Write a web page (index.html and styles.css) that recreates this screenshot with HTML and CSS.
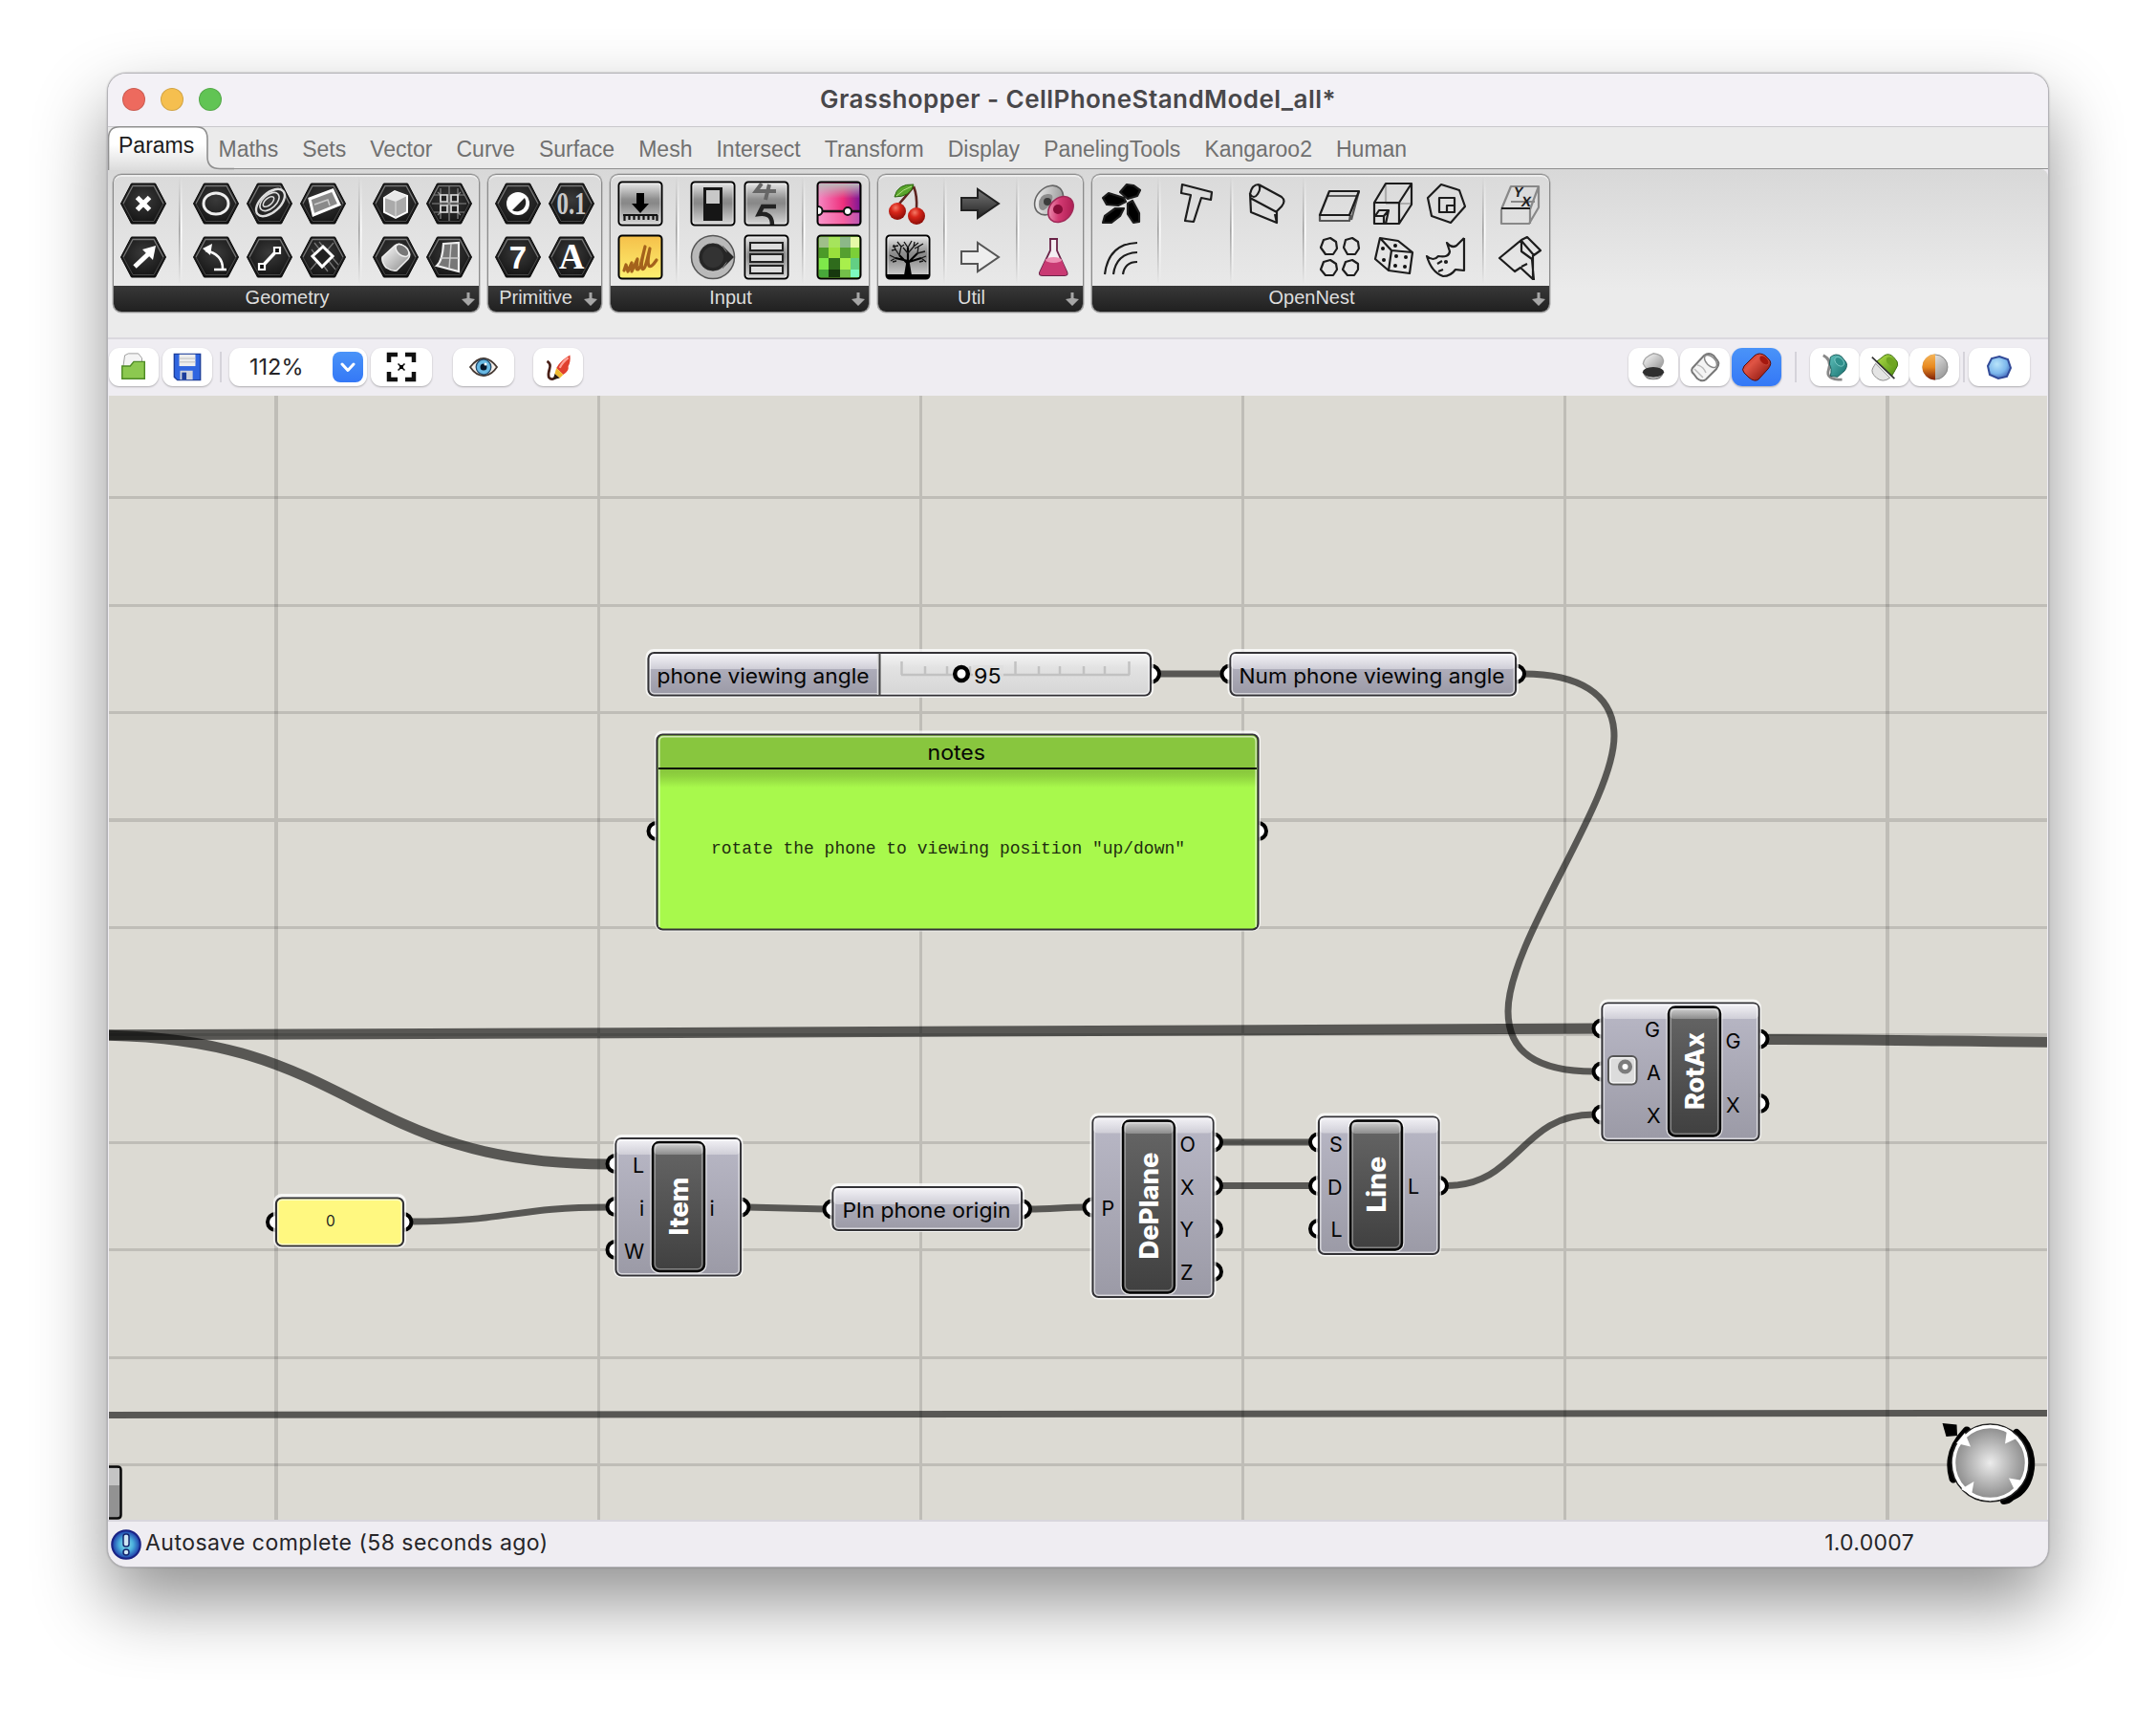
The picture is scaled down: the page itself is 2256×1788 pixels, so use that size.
FILE: index.html
```html
<!DOCTYPE html>
<html lang="en">
<head>
<meta charset="utf-8">
<title>Grasshopper - CellPhoneStandModel_all*</title>
<link rel="stylesheet" href="styles.css">
</head>
<body>
<svg class="defs" width="0" height="0">
  <defs>
    <radialGradient id="hexFill" cx=".5" cy=".4" r=".6"><stop offset="0" stop-color="#3a3a3a"/><stop offset="1" stop-color="#141414"/></radialGradient>
    <linearGradient id="tile" x2="0" y2="1"><stop offset="0" stop-color="#ececec"/><stop offset=".4" stop-color="#8e8e8e"/><stop offset=".5" stop-color="#888"/><stop offset="1" stop-color="#d8d8d8"/></linearGradient>
    <linearGradient id="grey" x2="1" y2="1"><stop offset="0" stop-color="#fff"/><stop offset="1" stop-color="#8a8a8a"/></linearGradient>
    <linearGradient id="gold" x2="0" y2="1"><stop offset="0" stop-color="#f5c04a"/><stop offset="1" stop-color="#fdf070"/></linearGradient>
    <linearGradient id="pink" x2="1" y2="0"><stop offset="0" stop-color="#f58ac4"/><stop offset=".6" stop-color="#ee2f7c"/><stop offset="1" stop-color="#7a1798"/></linearGradient>
    <linearGradient id="fade" x2="0" y2="1"><stop offset="0" stop-color="#bbb"/><stop offset=".6" stop-color="#bbb" stop-opacity="0"/></linearGradient>
    <radialGradient id="cherry" cx=".4" cy=".3" r=".7"><stop offset="0" stop-color="#f47a66"/><stop offset=".4" stop-color="#d8261a"/><stop offset="1" stop-color="#8c0d08"/></radialGradient>
    <linearGradient id="dark" x2="0" y2="1"><stop offset="0" stop-color="#777"/><stop offset="1" stop-color="#222"/></linearGradient>
    <linearGradient id="red" x2="1" y2="1"><stop offset="0" stop-color="#b81d12"/><stop offset=".35" stop-color="#e05545"/><stop offset="1" stop-color="#7d0b05"/></linearGradient>
    <linearGradient id="teal" x2="1" y2="1"><stop offset="0" stop-color="#5fc0bb"/><stop offset="1" stop-color="#17706e"/></linearGradient>
    <linearGradient id="green" x2="1" y2="1"><stop offset="0" stop-color="#b4e04a"/><stop offset="1" stop-color="#4b8a0f"/></linearGradient>
    <radialGradient id="sky" cx=".4" cy=".35" r=".7"><stop offset="0" stop-color="#b8e4fa"/><stop offset=".6" stop-color="#7db8ec"/><stop offset="1" stop-color="#3f63b8"/></radialGradient>
    <linearGradient id="orange" x2="0" y2="1"><stop offset="0" stop-color="#f5b559"/><stop offset=".5" stop-color="#e8891f"/><stop offset="1" stop-color="#7d1f08"/></linearGradient>
    <linearGradient id="rose" x2="1" y2="1"><stop offset="0" stop-color="#f8b4cc"/><stop offset=".45" stop-color="#d23a72"/><stop offset="1" stop-color="#a31449"/></linearGradient>
    <symbol id="hex" viewBox="0 0 48 48"><path d="M.5 24 11.500 3h25l11 21-11 21h-25z" fill="url(#hexFill)" stroke="#080808"/><path d="M3 24 13 5.500h22L45 24" fill="none" stroke="#777" stroke-width="1.300"/><path d="M45 24 35 42.500H13L3 24" fill="none" stroke="#484848"/></symbol>
    <symbol id="box" viewBox="0 0 48 48"><rect x="1.500" y="1.500" width="45" height="45" rx="3.500" fill="url(#tile)" stroke="#000" stroke-width="2"/><rect x="3" y="3" width="42" height="42" rx="2" fill="none" stroke="#fff" stroke-opacity=".6"/></symbol>
    <symbol id="more" viewBox="0 0 16 16"><path d="M6.500 1h3v6l5.500 1L8 15 1 8l5.500-1z" fill="#a6a6a6"/></symbol>
  </defs>
</svg>

<main class="window">
  <header class="titlebar">
    <div class="lights"><i class="light red"></i><i class="light amber"></i><i class="light green"></i></div>
    <h1 class="title">Grasshopper - CellPhoneStandModel_all*</h1>
  </header>

  <nav class="tabs">
    <span class="tab active">
      <svg class="tab-shape" width="132" height="46" viewBox="0 0 132 46">
        <defs><linearGradient id="tabFill" x2="0" y2="1"><stop offset=".4" stop-color="#fff"/><stop offset="1" stop-color="#dcdcdc"/></linearGradient></defs>
        <path d="M0 46V13Q.5 1 12 1H92Q104 1 104 13V32Q104 44.500 117 44.500V46z" fill="url(#tabFill)"/>
        <path d="M.5 46V13Q.5 .8 12 .8H92Q104 .8 104 13V32Q104 44.500 117 44.500H132" fill="none" stroke="#8f8f8f" stroke-width="1.600"/>
      </svg>
      <b>Params</b>
    </span>
    <span class="tab">Maths</span><span class="tab">Sets</span><span class="tab">Vector</span><span class="tab">Curve</span><span class="tab">Surface</span><span class="tab">Mesh</span><span class="tab">Intersect</span><span class="tab">Transform</span><span class="tab">Display</span><span class="tab">PanelingTools</span><span class="tab">Kangaroo2</span><span class="tab">Human</span>
  </nav>

  <section class="ribbon">
    <div class="group">
      <div class="icons">
        <div class="cols c1">
          <svg class="ic" viewBox="0 0 48 48"><use href="#hex"/><path d="M17.500 17.500l13 13M30.500 17.500l-13 13" stroke="#fff" stroke-width="5"/></svg>
          <svg class="ic" viewBox="0 0 48 48"><use href="#hex"/><path d="M15 34 31 19" stroke="#fff" stroke-width="5"/><path d="M23 16 37 12 34 27z" fill="#fff"/></svg>
        </div>
        <i class="sep"></i>
        <div class="cols c3">
          <svg class="ic" viewBox="0 0 48 48"><use href="#hex"/><ellipse cx="24" cy="24" rx="13" ry="11" fill="none" stroke="#eee" stroke-width="3"/></svg>
          <svg class="ic" viewBox="0 0 48 48"><use href="#hex"/><g fill="none" stroke="#ddd"><ellipse cx="25" cy="23" rx="18" ry="10" transform="rotate(-42 25 23)" stroke-width="2.400"/><ellipse cx="24" cy="22" rx="12" ry="7" transform="rotate(-42 24 22)" stroke-width="1.600"/><ellipse cx="23" cy="22" rx="7" ry="3.500" transform="rotate(-42 23 22)" stroke-width="1.500"/></g></svg>
          <svg class="ic" viewBox="0 0 48 48"><use href="#hex"/><path d="M10 19 34 10 41 25 14 36z" fill="#8a8a8a" stroke="#fff" stroke-width="3"/><path d="M15 25 29 20l2 6" fill="none" stroke="#ccc" stroke-width="1.500"/></svg>
          <svg class="ic" viewBox="0 0 48 48"><use href="#hex"/><path d="M13 17Q31 21 31 36M22 37H35" fill="none" stroke="#fff" stroke-width="2.600"/><path d="M10 15 20 10 18 22z" fill="#fff"/></svg>
          <svg class="ic" viewBox="0 0 48 48"><use href="#hex"/><path d="M16 34 31 18" stroke="#fff" stroke-width="3.500"/><g fill="#111" stroke="#fff" stroke-width="2.200"><path d="M13 31h6v6h-6zM29 14h6v6h-6z"/></g></svg>
          <svg class="ic" viewBox="0 0 48 48"><use href="#hex"/><path d="M15 9 37 37M35 9 11 37M12 16 29 39M20 8 40 32" stroke="#777" stroke-width="1.300"/><path d="M24 13 34 23 23 34 13 23z" fill="#222" stroke="#fff" stroke-width="3"/></svg>
        </div>
        <i class="sep"></i>
        <div class="cols c2">
          <svg class="ic" viewBox="0 0 48 48"><use href="#hex"/><path d="M12 18 23 11 36 16V33L24 39 12 33z" fill="#aaa" stroke="#fff" stroke-width="2"/><path d="M12 18 24 22 36 16 23 11z" fill="#e8e8e8"/><path d="M24 22V39" stroke="#ddd"/></svg>
          <svg class="ic" viewBox="0 0 48 48"><use href="#hex"/><path d="M15 8V40M24 6V42M33 8V40M8 15H40M6 24H42M8 33H40M12 12 36 36M36 12 12 36" stroke="#888" stroke-width="1.200"/><g fill="#222" stroke="#ddd" stroke-width="1.700"><path d="M15 15h7v7h-7zM26 15h7v7h-7zM15 26h7v7h-7zM26 26h7v7h-7z"/></g></svg>
          <svg class="ic" viewBox="0 0 48 48"><use href="#hex"/><path d="M10 24 23 12Q28 8 33 13L38 19Q40 22 37 26L25 38Q20 39 14 35 9 29 10 24z" fill="url(#grey)" stroke="#eee" stroke-width="1.500"/><ellipse cx="31" cy="17" rx="8" ry="5" transform="rotate(40 31 17)" fill="#777" stroke="#eee" stroke-width="1.500"/></svg>
          <svg class="ic" viewBox="0 0 48 48"><use href="#hex"/><path d="M18 10 34 9V39L11 33Q17 28 18 10z" fill="#777" stroke="#eee" stroke-width="2.200"/><path d="M26 10 24 36M15 25 34 25" stroke="#ccc" stroke-width="1.500"/></svg>
        </div>
      </div>
      <div class="label"><span>Geometry</span><svg class="more"><use href="#more"/></svg></div>
    </div>

    <div class="group">
      <div class="icons">
        <div class="cols c2">
          <svg class="ic" viewBox="0 0 48 48"><use href="#hex"/><circle cx="24" cy="24" r="12" fill="#fff"/><path d="M31 18A9.500 9.500 0 0 1 18 31z" fill="#222"/></svg>
          <svg class="ic" viewBox="0 0 48 48"><use href="#hex"/><text x="24" y="35" class="glyph narrow" textLength="31" lengthAdjust="spacingAndGlyphs">0.1</text></svg>
          <svg class="ic" viewBox="0 0 48 48"><use href="#hex"/><text x="24" y="35.500" class="glyph">7</text></svg>
          <svg class="ic" viewBox="0 0 48 48"><use href="#hex"/><text x="24" y="35.500" class="glyph serif">A</text></svg>
        </div>
      </div>
      <div class="label"><span>Primitive</span><svg class="more"><use href="#more"/></svg></div>
    </div>

    <div class="group">
      <div class="icons">
        <div class="cols c1">
          <svg class="ic" viewBox="0 0 48 48"><use href="#box"/><path d="M20 13h8v11h5l-9 10-9-10h5z"/><path d="M6 36H42M7.500 36v6M12.500 36v5M17.500 36v5M22.500 36v5M27.500 36v5M32.500 36v5M37.500 36v5M41.500 36v6" stroke="#111" stroke-width="2.200"/></svg>
          <svg class="ic" viewBox="0 0 48 48"><rect x="1.500" y="1.500" width="45" height="45" rx="3.500" fill="url(#gold)" stroke="#000" stroke-width="2"/><path d="M7 38 9 32 11 39 15 30 15 39 21 26 20 36Q22 39 24 33L29 13Q24 33 26 36T31 27L34 15Q31 30 33 33T41 27" fill="none" stroke="#a4621c" stroke-width="3.200" stroke-linejoin="round" stroke-linecap="round"/></svg>
        </div>
        <i class="sep"></i>
        <div class="cols c2">
          <svg class="ic" viewBox="0 0 48 48"><use href="#box"/><path d="M14 7h20v35H14z" fill="#161616"/><path d="M17 10h14v14H17z" fill="#c8c8c8"/></svg>
          <svg class="ic" viewBox="0 0 48 48"><use href="#box"/><path d="M19 3 13 11H34M27 4 23 20" fill="none" stroke="#666" stroke-width="4"/><path d="M34 27H20L16 35Q30 33 30 46" fill="none" stroke="#222" stroke-width="4.500"/></svg>
          <svg class="ic" viewBox="0 0 48 48"><circle cx="24" cy="24" r="22.500" fill="#b9b9b9" stroke="#555" stroke-width="1.500"/><path d="M34 12 46 24 34 36z" fill="#262626"/><circle cx="24" cy="24" r="15" fill="#262626" stroke="#eee" stroke-opacity=".5"/><path d="M32 14 45 24 32 34z" fill="#262626"/><circle cx="24" cy="24" r="11" fill="#333"/></svg>
          <svg class="ic" viewBox="0 0 48 48"><use href="#box"/><g fill="#ddd" stroke="#222" stroke-width="2"><path d="M7 9h34v8H7zM7 21h34v8H7zM7 33h34v8H7z"/></g></svg>
        </div>
        <i class="sep"></i>
        <div class="cols c1">
          <svg class="ic" viewBox="0 0 48 48"><rect x="1.500" y="1.500" width="45" height="45" rx="3.500" fill="url(#pink)" stroke="#000" stroke-width="2"/><path d="M3 3h42v26H3z" fill="url(#fade)"/><path d="M3 34h42v11H3z" fill="#ff9fd0" opacity=".45"/><path d="M2 32H46" stroke="#111" stroke-width="2.500"/><path d="M2 27a4.500 4.500 0 0 1 0 9" fill="#fff" stroke="#111" stroke-width="2"/><circle cx="33" cy="32" r="4" fill="#fff" stroke="#111" stroke-width="2"/></svg>
          <svg class="ic" viewBox="0 0 48 48"><rect x="1.500" y="1.500" width="45" height="45" rx="3.500" fill="#7ccf38" stroke="#000" stroke-width="2"/><path fill="#9fbf8a" d="M3 3h10v11H3z"/><path fill="#a6e45c" d="M13 3h12v11H13z"/><path fill="#8cb888" d="M25 3h11v11H25z"/><path fill="#e6f9a8" d="M36 3h9v11h-9z"/><path fill="#4b9a28" d="M3 14h10v11H3z"/><path fill="#9adf3c" d="M13 14h12v11H13z"/><path fill="#55a030" d="M25 14h11v11H25z"/><path fill="#7ee84a" d="M3 25h10v12H3z"/><path fill="#2f6b1c" d="M13 25h12v12H13z"/><path fill="#a8ef4c" d="M25 25h11v12H25z"/><path fill="#63cf84" d="M36 25h9v12h-9z"/><path fill="#48a83a" d="M3 37h10v8H3z"/><path fill="#17380e" d="M13 37h12v8H13z"/><path fill="#74c04a" d="M25 37h11v8H25z"/><path fill="#7dfac0" d="M36 37h9v8h-9z"/></svg>
        </div>
      </div>
      <div class="label"><span>Input</span><svg class="more"><use href="#more"/></svg></div>
    </div>

    <div class="group">
      <div class="icons">
        <div class="cols c1">
          <svg class="ic" viewBox="0 0 48 48"><path d="M30 6Q24 14 15 24M30 6Q34 16 33 30" fill="none" stroke="#5e2420" stroke-width="2.600"/><path d="M10 17Q13 3 30 4 27 17 10 17z" fill="#5aa52c" stroke="#2c6412"/><path d="M12 16Q19 9 28 6" stroke="#b8e08a" fill="none"/><circle cx="13" cy="32" r="9" fill="url(#cherry)"/><circle cx="33" cy="37" r="9" fill="url(#cherry)"/></svg>
          <svg class="ic" viewBox="0 0 48 48"><use href="#box"/><path d="M2 42H46V46H2z"/><path d="M20 43 22.500 28h3L28 43z"/><path d="M24 31 15 22M24 30 34 20M24 28 11 25M25 29 38 25M24 28V14" fill="none" stroke="#000" stroke-width="2.200"/><g fill="none" stroke="#151515" stroke-width="1.300"><path d="M15 22 11 16 7 17M15 22 17 13 13 8M11 25 6 28M11 25 5 22M24 14 20 8M24 14 28 7M24 20 19 14M24 20 30 13 35 9M34 20 35 13 40 10M34 20 42 18M38 25 43 29M38 25 43 23M17 13 20 11M11 16 9 11M30 13 31 8M8 29 12 28M40 28 36 29M14 12 8 13M35 13 31 15"/></g></svg>
        </div>
        <i class="sep"></i>
        <div class="cols c1">
          <svg class="ic" viewBox="0 0 48 48"><path d="M4 18H21V9L43 24 21 39V31H4z" fill="url(#dark)" stroke="#222" stroke-width="2"/></svg>
          <svg class="ic" viewBox="0 0 48 48"><path d="M4 18H21V9L43 24 21 39V31H4z" fill="#eee" stroke="#555" stroke-width="2"/></svg>
        </div>
        <i class="sep"></i>
        <div class="cols c1">
          <svg class="ic" viewBox="0 0 48 48"><ellipse cx="19.500" cy="20.500" rx="17" ry="13" transform="rotate(-48 19.500 20.500)" fill="url(#grey)" stroke="#666" stroke-width="1.600"/><path d="M9 25Q9 15 18 14 25 13 23 20T14 31Q9 31 9 25z" fill="#8d8d8d"/><circle cx="18" cy="22" r="4" fill="#3c3c3c"/><ellipse cx="32" cy="30" rx="15" ry="11.500" transform="rotate(-48 32 30)" fill="url(#rose)" stroke="#a02a58" stroke-width="1.600"/><circle cx="29" cy="30" r="5" fill="#860d38"/></svg>
          <svg class="ic" viewBox="0 0 48 48"><path d="M20 5h9M21 6V17L10 40Q9 43 13 43H36Q40 43 38 39L28 17V6" fill="#f4eef2" stroke="#6a2348" stroke-width="1.800"/><path d="M16 27H33L38 39Q40 43 36 43H13Q9 43 10 40z" fill="#c93a73"/><ellipse cx="24.500" cy="27" rx="8.500" ry="3" fill="#ee90b4"/></svg>
        </div>
      </div>
      <div class="label"><span>Util</span><svg class="more"><use href="#more"/></svg></div>
    </div>

    <div class="group">
      <div class="icons line-art">
        <div class="cols c1">
          <svg class="ic" viewBox="0 0 48 48"><path fill="#000" d="M4 18 10 13 26 18 28 22 20 26 8 25zM22 12 29 4 36 5 43 10 40 16 30 19zM4 44 6 37 17 29 26 29 22 37 13 44zM30 24 35 21 42 34 42 43 36 44 30 35z"/></svg>
          <svg class="ic" viewBox="0 0 48 48"><path d="M6 42Q10 10 40 9M15 42Q18 20 40 19M25 42Q27 29 40 29"/></svg>
        </div>
        <i class="sep"></i>
        <div class="cols c1">
          <svg class="ic" viewBox="0 0 48 48"><path d="M11 4 42 12 41 20 31 18 23 43 14 42 20 15 10 13z"/></svg>
        </div>
        <i class="sep"></i>
        <div class="cols c1">
          <svg class="ic" viewBox="0 0 48 48"><path d="M6 13 7 33 34 44V33L6 18M15 4 39 17Q44 21 39 27L33 33M15 4Q8 4 6 14 10 20 14 14T15 4M34 44 32 35"/></svg>
        </div>
        <i class="sep"></i>
        <div class="cols c3">
          <svg class="ic" viewBox="0 0 48 48"><path d="M13 11H44L34 36H3z"/><path d="M12 16H42M3 36V42H34L35 36M44 11 36 41" opacity=".7"/></svg>
          <svg class="ic" viewBox="0 0 48 48"><path d="M4 23 16 3H43L30 23zM4 23V45H30V23M30 45 43 25V3M5 37 9 31H19L16 45M5 37H14V45M14 37 19 31"/><path d="M16 3V23M16 24H43" opacity=".25"/></svg>
          <svg class="ic" viewBox="0 0 48 48"><path d="M4 18 18 4 37 10 43 27 28 44 8 37zM16 18H32V33H16zM32 26H24V33"/></svg>
          <svg class="ic" viewBox="0 0 48 48"><path d="M7 6 14 4 20 8 21 15 17 21 9 21 4 14zM30 6 37 4 43 8 44 15 40 21 32 21 28 14zM7 29 14 27 20 31 21 37 17 43 9 43 4 37zM30 29 37 27 43 31 43 37 39 43 32 43 27 37z"/></svg>
          <svg class="ic" viewBox="0 0 48 48"><path d="M10 4 29 7 44 19 41 41 19 38 5 26zM10 4 22 17 44 19M22 17 19 38"/><g fill="#111" stroke="none"><circle cx="26" cy="12" r="2"/><circle cx="13" cy="15" r="2"/><circle cx="14" cy="27" r="2"/><circle cx="27" cy="23" r="2"/><circle cx="37" cy="24" r="2"/><circle cx="26" cy="33" r="2"/><circle cx="36" cy="34" r="2"/></g></svg>
          <svg class="ic" viewBox="0 0 48 48"><path d="M42 4V38L33 37Q28 44 20 44 8 40 3 23 10 29 15 23 26 25 27 18L24 9Q29 15 34 12L42 4M14 31 19 28M15 39 20 37"/><circle cx="23" cy="29" r="1" /></svg>
        </div>
        <i class="sep"></i>
        <div class="cols c1">
          <svg class="ic" viewBox="0 0 48 48"><g stroke="#888"><path d="M5 30 15 6H44L35 30M5 30V45H34L44 28V6M35 30V45M15 22H40"/></g><path d="M5 29H35"/><text x="20" y="17" class="axis" transform="skewX(-10) translate(0)">Y</text><text x="30" y="27" class="axis" transform="skewX(-10)">X</text></svg>
          <svg class="ic" viewBox="0 0 48 48"><path d="M3 25 26 6 26 18 37 26 39 48 25 35 19 39zM26 6 32 3 46 17 39 22 26 7M38 22V48M26 34 32 31"/></svg>
        </div>
      </div>
      <div class="label"><span>OpenNest</span><svg class="more"><use href="#more"/></svg></div>
    </div>
  </section>

  <section class="toolbar">
    <span class="btn"><svg class="tb" viewBox="-1 -1 34 34"><path d="M6 3 10 1H21L25 6V17H4z" fill="#f4f4f4" stroke="#999"/><path d="M3 15H12L16 10H28V29H3z" fill="#8cc850" stroke="#4e8a25" stroke-width="1.500"/></svg></span>
    <span class="btn save"><svg class="tb" viewBox="-1 -1 34 34"><path d="M1.500 1.500H30.500V30.500H5L1.500 27z" fill="#2f65e0" stroke="#1d3f9c" stroke-width="1.500"/><path d="M7 2H25V15H7z" fill="#eee"/><path d="M7 6.500H25M7 10.500H25" stroke="#bbb"/><path d="M8 20H22V30H8z" fill="#d0d4dc"/><path d="M10 22h5v8h-5z" fill="#1d3f9c"/></svg></span>
    <i class="bar"></i>
    <span class="combo"><span class="zoom">112%</span><span class="drop"><svg width="16" height="12" viewBox="0 0 16 12"><path d="M2 3 8 9.500 14 3" fill="none" stroke="#fff" stroke-width="3" stroke-linecap="round" stroke-linejoin="round"/></svg></span></span>
    <span class="btn wide fit"><svg class="tb" viewBox="0 0 32 32"><path d="M3 11V3H12M20 3H29V11M29 21V29H20M12 29H3V21" fill="none" stroke="#111" stroke-width="4.500"/><path d="M12.500 12.500l7 7M19.500 12.500l-7 7" stroke="#111" stroke-width="1.600"/><path d="M14 14h4v4h-4z"/></svg></span>
    <span class="btn wide eye"><svg class="tb" viewBox="0 0 32 32"><path d="M2 16Q9 7 16 7T30 16Q24 25 16 25T2 16z" fill="#f5efe9" stroke="#443832" stroke-width="1.800"/><circle cx="16" cy="16" r="7.800" fill="#68b9e4" stroke="#244c6e" stroke-width="1.300"/><circle cx="16" cy="16" r="3.500" fill="#06162a"/><circle cx="18" cy="13" r="1.500" fill="#fff"/></svg></span>
    <span class="btn brush"><svg class="tb" viewBox="-2 -2 36 36"><path d="M3 9Q8 12 6 18T5 28Q9 33 14 27" fill="none" stroke="#4a2018" stroke-width="3"/><path d="M30 2Q19 8 14 17L22 25Q29 21 28 15 31 10 30 2z" fill="#e0402f"/><path d="M28 5Q21 10 18 17" stroke="#ffa095" stroke-width="2.500" fill="none"/><path d="M14 17 22 25 18 29 12 24z" fill="#f0b92c"/><path d="M12 24 18 29 10 31z" fill="#2c1c10"/></svg></span>

    <span class="btn first-right"><svg class="tb" viewBox="-2 -1 36 36"><path d="M4 13Q5 5 16 1 27 2 28 10 27 18 18 22 8 22 4 13z" fill="url(#grey)" stroke="#a8a8a8" stroke-width="1.500"/><path d="M4 24Q16 36 28 24 26 32 16 32T4 24z" fill="#888"/><ellipse cx="16" cy="23" rx="12.500" ry="6" fill="#2e2e2e"/></svg></span>
    <span class="btn g2"><svg class="tb" viewBox="0 0 32 32"><path d="M3 17 15 4Q20 0 25 4L29 9Q32 13 28 18L17 29Q13 32 8 28L4 23Q1 20 3 17z" fill="#f4f4f4" stroke="#777" stroke-width="2"/><ellipse cx="22" cy="10" rx="8" ry="4.500" transform="rotate(45 22 10)" fill="#fff" stroke="#888" stroke-width="1.500"/><path d="M5 18 14 27M8 14Q14 15 17 22" stroke="#bbb" stroke-width="1.500" fill="none"/></svg></span>
    <span class="btn g2 on"><svg class="tb" viewBox="0 0 32 32"><path d="M3 15 14 4Q19 0 25 4L29 8Q33 12 28 18L18 29Q14 32 8 27L3 22Q0 19 3 15z" fill="url(#red)" stroke="#5b0b06"/><ellipse cx="24" cy="9" rx="6" ry="3.500" transform="rotate(45 24 9)" fill="#a5180e" stroke="#c8483a" stroke-width=".8"/></svg></span>
    <i class="bar b2"></i>
    <span class="btn"><svg class="tb" viewBox="-1 -1 34 34"><path d="M3 3Q13 8 9 19T24 30" fill="none" stroke="#888" stroke-width="3"/><path d="M11 5Q17 0 23 4L28 10Q31 14 27 20L19 27 11 26Q13 18 10 13z" fill="url(#teal)" stroke="#155856"/><ellipse cx="21" cy="10" rx="6" ry="4" transform="rotate(45 21 10)" fill="#2f8f8b" stroke="#8fd6d2" stroke-width=".8"/></svg></span>
    <span class="btn g1"><svg class="tb" viewBox="-1 -1 34 34"><path d="M6 12 22 28Q14 34 7 28T3 17z" fill="#e4e4e4" stroke="#888"/><path d="M7 10 16 3Q21 0 26 5L30 10Q32 14 28 19L24 26z" fill="url(#green)" stroke="#3f6d10"/><path d="M2 5 27 29" stroke="#333" stroke-width="1.800"/><ellipse cx="23" cy="10" rx="6" ry="4" transform="rotate(45 23 10)" fill="#6fa522"/></svg></span>
    <span class="btn"><svg class="tb" viewBox="0 0 32 32"><circle cx="17" cy="16" r="13" fill="url(#grey)" stroke="#888"/><path d="M17 2.500A13.500 13.500 0 0 0 17 29.500z" fill="url(#orange)"/></svg></span>
    <i class="bar b3"></i>
    <span class="btn wide last"><svg class="tb" viewBox="0 0 32 32"><path d="M16 5 25 8 28 17 24 26 15 28 6 24 4 15 8 7z" fill="url(#sky)" stroke="#314a98" stroke-width="2"/></svg></span>
  </section>

  <svg class="canvas" width="2028" height="1176" viewBox="114 414 2028 1176">
    <defs>
      <linearGradient id="body" x2="0" y2="1"><stop offset="0" stop-color="#b9b8c6"/><stop offset="1" stop-color="#9b9aa6"/></linearGradient>
      <linearGradient id="gloss" x2="0" y2="1"><stop offset="0" stop-color="#f3f2f6"/><stop offset="1" stop-color="#cfced7"/></linearGradient>
      <linearGradient id="core" x2="0" y2="1"><stop offset="0" stop-color="#666"/><stop offset="1" stop-color="#404040"/></linearGradient>
      <linearGradient id="coreGloss" x2="0" y2="1"><stop offset="0" stop-color="#cfcfcf"/><stop offset="1" stop-color="#8c8c8c"/></linearGradient>
      <linearGradient id="track" x2="0" y2="1"><stop offset="0" stop-color="#f4f4f4"/><stop offset=".35" stop-color="#e2e2e2"/><stop offset="1" stop-color="#d6d6d6"/></linearGradient>
      <linearGradient id="noteShade" x2="0" y2="1"><stop offset="0" stop-color="#86c43c"/><stop offset=".4" stop-color="#8fd23f"/><stop offset="1" stop-color="#a8f94c"/></linearGradient>
      <radialGradient id="ball"><stop offset="0" stop-color="#ececec"/><stop offset="1" stop-color="#8c8c8c"/></radialGradient>
    </defs>
    <g class="grid">
      <path stroke-width="4" d="M289 414V1590M1975 414V1590M114 858H2142"/>
      <path stroke-width="3" d="M626.500 414V1590M963.500 414V1590M1300.500 414V1590M1637.500 414V1590M114 520.500H2142M114 633.500H2142M114 745.500H2142M114 970.500H2142M114 1082.500H2142M114 1195.500H2142M114 1307.500H2142M114 1420.500H2142M114 1532.500H2142"/>
    </g>

    <g class="wires">
      <path class="thick" d="M60 1083C600 1083 1100 1076 1668 1076"/>
      <path class="thick" d="M100 1083C370 1083 370 1218 635 1218"/>
      <path class="thick" d="M1848 1087.500C1950 1087 2040 1090 2200 1090.500"/>
      <path d="M1212 705H1280M430 1278C530 1278 540 1263 636 1263M782 1263 864 1265M1077 1265C1100 1265 1115 1263 1136 1263M1278 1195H1372M1278 1240.500H1372M1513 1240.500C1590 1240.500 1590 1166 1668 1166"/>
      <path d="M1594 705C1650 705 1689 725 1689 770C1689 840 1578 985 1578 1058C1578 1102 1610 1121 1668 1121"/>
      <path d="M114 1480.500 2142 1478.500"/>
    </g>

    <g class="grips">
      <circle cx="1204.500" cy="705" r="8.500"/><circle cx="1287" cy="705" r="8.500"/><circle cx="1586.500" cy="705" r="8.500"/>
      <circle cx="687" cy="869.500" r="8.500"/><circle cx="1316.500" cy="869.500" r="8.500"/>
      <circle cx="1676" cy="1076" r="8.500"/><circle cx="1676" cy="1121" r="8.500"/><circle cx="1676" cy="1166" r="8.500"/><circle cx="1841" cy="1087" r="8.500"/><circle cx="1841" cy="1154.500" r="8.500"/>
      <circle cx="288.500" cy="1278.500" r="8.500"/><circle cx="422" cy="1278.500" r="8.500"/>
      <circle cx="644" cy="1217.500" r="8.500"/><circle cx="644" cy="1262.500" r="8.500"/><circle cx="644" cy="1307.500" r="8.500"/><circle cx="775" cy="1263" r="8.500"/>
      <circle cx="871" cy="1265" r="8.500"/><circle cx="1069.500" cy="1265" r="8.500"/>
      <circle cx="1143" cy="1263" r="8.500"/><circle cx="1269.500" cy="1195" r="8.500"/><circle cx="1269.500" cy="1240.500" r="8.500"/><circle cx="1269.500" cy="1285.500" r="8.500"/><circle cx="1269.500" cy="1330.500" r="8.500"/>
      <circle cx="1379.500" cy="1195" r="8.500"/><circle cx="1379.500" cy="1240.500" r="8.500"/><circle cx="1379.500" cy="1285.500" r="8.500"/><circle cx="1505.500" cy="1240.500" r="8.500"/>
    </g>

    <!-- number slider -->
    <g>
      <rect class="halo" x="678" y="681.500" width="526.500" height="46" rx="6"/>
      <rect class="edge" x="678.500" y="683" width="525.500" height="44.500" rx="6" fill="url(#body)"/>
      <path d="M680 700V689Q680 684.500 685 684.500H920V700z" fill="url(#gloss)"/>
      <path d="M921 684H1197Q1202.500 684 1202.500 690V721Q1202.500 726.500 1197 726.500H921z" fill="url(#track)"/>
      <rect class="shine" x="680.300" y="684.800" width="522" height="41" rx="4.500"/>
      <path d="M918.500 684V727" stroke="#ddd" stroke-width="1.500"/><path d="M920.500 683V727.500" stroke="#444" stroke-width="2"/>
      <path d="M943 706H1182M943.500 692V706M1062.500 692V706M1181.500 692V706M968 697V706M991 697V706M1015 697V706M1037 697V706M1087 697V706M1109 697V706M1134 697V706M1156 697V706" stroke="#c2c2c2" stroke-width="2.500"/>
      <path d="M1018 696H1050V707.500H1018z" fill="#dedede" opacity=".8"/>
      <ellipse cx="1006" cy="705" rx="6.800" ry="7" fill="#fff" stroke="#000" stroke-width="4.500"/>
      <text x="687.500" y="714.500" textLength="222" lengthAdjust="spacingAndGlyphs">phone viewing angle</text>
      <text x="1019" y="714.500" textLength="28.500" lengthAdjust="spacingAndGlyphs">95</text>
    </g>

    <g>
      <rect class="halo" x="1287" y="681.500" width="299.500" height="46" rx="6"/>
      <rect class="edge" x="1287.500" y="683" width="298.500" height="44.500" rx="6" fill="url(#body)"/>
      <rect x="1288.500" y="684" width="296.500" height="16" rx="4" fill="url(#gloss)"/>
      <rect class="shine" x="1289.300" y="684.800" width="295" height="41" rx="4.500"/>
      <text x="1296.500" y="714.500" textLength="278" lengthAdjust="spacingAndGlyphs">Num phone viewing angle</text>
    </g>

    <!-- notes panel -->
    <g>
      <rect class="halo" x="687.500" y="767" width="629" height="205" rx="6"/>
      <rect class="edge" x="687.500" y="768.500" width="629" height="204" rx="6" fill="#a8f94c"/>
      <path d="M689 804V775Q689 770 694 770H1310Q1315 770 1315 775V804z" fill="#88c63e"/>
      <rect x="689" y="804" width="626" height="20" fill="url(#noteShade)"/>
      <path class="shine" d="M689.800 970V776Q689.800 770.800 695 770.800H1309Q1314.200 770.800 1314.200 776V970"/>
      <path d="M689 804H1315" stroke="#0a0a0a" stroke-width="2"/>
      <text x="970.500" y="795" textLength="60.500" lengthAdjust="spacingAndGlyphs">notes</text>
      <text class="mono" x="744" y="893" textLength="496" lengthAdjust="spacingAndGlyphs">rotate the phone to viewing position "up/down"</text>
    </g>

    <!-- Rotate Axis -->
    <g>
      <rect class="halo" x="1676" y="1048" width="164.500" height="145" rx="6"/>
      <rect class="edge" x="1676.500" y="1049.500" width="164" height="143.500" rx="6" fill="url(#body)"/>
      <rect x="1677.500" y="1050.500" width="162" height="15.500" rx="4" fill="url(#gloss)"/>
      <rect class="shine" x="1678.300" y="1051.300" width="160.400" height="140" rx="4.500"/>
      <rect class="ring" x="1745" y="1052.500" width="56" height="137" rx="8"/>
      <rect class="core" x="1746" y="1053.500" width="54" height="135" rx="7"/>
      <rect x="1747.500" y="1055" width="51" height="11" rx="4" fill="url(#coreGloss)"/>
      <rect class="core-shine" x="1748.300" y="1055.800" width="49.400" height="130.500" rx="5"/>
      <rect x="1683" y="1105" width="29.500" height="29.500" rx="5" fill="#dcdcdc" stroke="#555" stroke-width="2"/><rect x="1684.800" y="1106.800" width="26" height="26" rx="3" fill="none" stroke="#fff"/>
      <circle cx="1700.500" cy="1116" r="5.300" fill="#fff" stroke="#7c7c7c" stroke-width="4.500"/>
      <text x="1721" y="1084.500">G</text><text x="1723" y="1129.700">A</text><text x="1723" y="1175">X</text>
      <text x="1805.500" y="1096.500">G</text><text x="1806" y="1163.500">X</text>
      <text class="name" transform="translate(1782.500 1161) rotate(-90)" textLength="81" lengthAdjust="spacingAndGlyphs">RotAx</text>
    </g>

    <!-- constant panel -->
    <g>
      <rect class="halo" x="288.500" y="1251.500" width="134" height="52" rx="6"/>
      <rect class="edge" x="289" y="1253.500" width="133" height="50" rx="6" fill="#fff880"/>
      <rect class="shine" x="290.800" y="1255.300" width="129.400" height="46.500" rx="4.500"/>
      <text class="small" x="341" y="1283">0</text>
    </g>

    <!-- List Item -->
    <g>
      <rect class="halo" x="644.500" y="1189.500" width="130.500" height="145" rx="6"/>
      <rect class="edge" x="644.500" y="1191" width="130.500" height="143.500" rx="6" fill="url(#body)"/>
      <rect x="645.500" y="1192" width="128.500" height="16" rx="4" fill="url(#gloss)"/>
      <rect class="shine" x="646.300" y="1192.800" width="127" height="140" rx="4.500"/>
      <rect class="ring" x="682" y="1194" width="56" height="137" rx="8"/>
      <rect class="core" x="683" y="1195" width="54" height="135" rx="7"/>
      <rect x="684.500" y="1196.500" width="51" height="11.500" rx="4" fill="url(#coreGloss)"/>
      <rect class="core-shine" x="685.300" y="1197.300" width="49.400" height="130.500" rx="5"/>
      <text x="662" y="1227">L</text><text x="669" y="1272">i</text><text x="653" y="1317">W</text><text x="742.500" y="1272">i</text>
      <text class="name" transform="translate(719.500 1292.500) rotate(-90)" textLength="61" lengthAdjust="spacingAndGlyphs">Item</text>
    </g>

    <g>
      <rect class="halo" x="871" y="1240.500" width="198.500" height="46" rx="6"/>
      <rect class="edge" x="871.500" y="1242" width="197.500" height="45" rx="6" fill="url(#body)"/>
      <rect x="872.500" y="1243" width="195.500" height="17" rx="4" fill="url(#gloss)"/>
      <rect class="shine" x="873.300" y="1243.800" width="194" height="41.500" rx="4.500"/>
      <text x="881.500" y="1274" textLength="176" lengthAdjust="spacingAndGlyphs">Pln phone origin</text>
    </g>

    <!-- Deconstruct Plane -->
    <g>
      <rect class="halo" x="1143" y="1167" width="127" height="190" rx="6"/>
      <rect class="edge" x="1143.500" y="1168.500" width="126" height="188.500" rx="6" fill="url(#body)"/>
      <rect x="1144.500" y="1169.500" width="124" height="16" rx="4" fill="url(#gloss)"/>
      <rect class="shine" x="1145.300" y="1170.300" width="122.500" height="185" rx="4.500"/>
      <rect class="ring" x="1174" y="1171.500" width="56" height="182" rx="8"/>
      <rect class="core" x="1175" y="1172.500" width="54" height="180" rx="7"/>
      <rect x="1176.500" y="1174" width="51" height="12" rx="4" fill="url(#coreGloss)"/>
      <rect class="core-shine" x="1177.300" y="1174.800" width="49.400" height="175.500" rx="5"/>
      <text x="1152.500" y="1271.500">P</text><text x="1234.500" y="1204.500">O</text><text x="1235" y="1249.500">X</text><text x="1234.500" y="1294">Y</text><text x="1235" y="1339">Z</text>
      <text class="name" transform="translate(1212 1317.500) rotate(-90)" textLength="112" lengthAdjust="spacingAndGlyphs">DePlane</text>
    </g>

    <!-- Line SDL -->
    <g>
      <rect class="halo" x="1379.500" y="1167" width="126" height="145" rx="6"/>
      <rect class="edge" x="1380" y="1168.500" width="125.500" height="143.500" rx="6" fill="url(#body)"/>
      <rect x="1381" y="1169.500" width="123.500" height="16" rx="4" fill="url(#gloss)"/>
      <rect class="shine" x="1381.800" y="1170.300" width="122" height="140" rx="4.500"/>
      <rect class="ring" x="1412" y="1171.500" width="56" height="137" rx="8"/>
      <rect class="core" x="1413" y="1172.500" width="54" height="135" rx="7"/>
      <rect x="1414.500" y="1174" width="51" height="12" rx="4" fill="url(#coreGloss)"/>
      <rect class="core-shine" x="1415.300" y="1174.800" width="49.400" height="130.500" rx="5"/>
      <text x="1391" y="1204.500">S</text><text x="1389" y="1249.500">D</text><text x="1392.500" y="1294">L</text><text x="1473" y="1249">L</text>
      <text class="name" transform="translate(1450 1268.500) rotate(-90)" textLength="58.500" lengthAdjust="spacingAndGlyphs">Line</text>
    </g>

    <path d="M110 1534.500H123Q126.500 1534.500 126.500 1538V1585Q126.500 1588.500 123 1588.500H110z" fill="#929292" stroke="#0a0a0a" stroke-width="2.500"/>
    <path d="M114 1536H125V1554H114z" fill="#c4c4c4"/>

    <!-- canvas compass -->
    <g>
      <path d="M2044 1547Q2036 1520 2058 1497" fill="none" stroke="#000" stroke-width="9" stroke-linecap="round"/>
      <path d="M2110 1499Q2127 1514 2125 1536 2122 1559 2105 1566 2101 1570 2097 1570" fill="none" stroke="#000" stroke-width="8" stroke-linecap="round"/>
      <path d="M2032.500 1489 2047.500 1490.500 2048 1502 2036.500 1503z"/>
      <circle cx="2082.500" cy="1530.500" r="38" fill="url(#ball)"/>
      <circle cx="2082.500" cy="1530.500" r="40.500" fill="none" stroke="#222" stroke-width="1.500"/>
      <circle cx="2082.500" cy="1530.500" r="38" fill="none" stroke="#fff" stroke-width="3.500"/>
      <path fill="#fff" d="M2047 1510 2062 1513.500 2056 1499zM2098 1510.500 2112 1504 2100 1496zM2102 1546.500 2117 1549 2108 1559zM2052 1558 2065.500 1550 2063 1564z"/>
    </g>
  </svg>

  <footer class="status">
    <svg class="info" viewBox="0 0 32 32"><defs><radialGradient id="info"><stop offset="0" stop-color="#8be4ee"/><stop offset=".5" stop-color="#4aaedc"/><stop offset="1" stop-color="#1c38a8"/></radialGradient></defs><circle cx="16" cy="16" r="14.800" fill="url(#info)" stroke="#1a2384" stroke-width="2"/><rect x="13" y="5" width="6" height="13" rx="2.500" fill="#cfe6f4" stroke="#15256e" stroke-width="1.500"/><circle cx="16" cy="24" r="3" fill="#cfe6f4" stroke="#15256e" stroke-width="1.500"/></svg>
    <span class="message">Autosave complete (58 seconds ago)</span>
    <span class="version">1.0.0007</span>
  </footer>
</main>
</body>
</html>
```
FILE: styles.css
```css
body {
  display: flow-root;
  margin: 0;
  min-height: 1788px;
  background: #fff;
  font-family: Inter, "Liberation Sans", sans-serif;
  color: #262528;
}
.defs { position: absolute; }

.window {
  box-sizing: border-box;
  width: 2032px;
  height: 1564px;
  margin: 76px 112px 0;
  border: 1px solid #b4b3b8;
  border-radius: 20px;
  background: #efedf2;
  overflow: hidden;
  box-shadow: 0 36px 74px rgba(0, 0, 0, .43), 0 0 2px rgba(0, 0, 0, .3);
  display: flex;
  flex-direction: column;
}

.titlebar {
  display: grid;
  grid-template-columns: 1fr auto 1fr;
  align-items: center;
  height: 55px;
  border-bottom: 1px solid #c9c8cc;
  background: #f3f1f6;
}
.lights { display: flex; gap: 16px; padding-left: 15px; margin-top: -1px; }
.light { box-sizing: border-box; width: 24px; height: 24px; border-radius: 50%; border: 1px solid rgba(0, 0, 0, .14); }
.light.red { background: #ed6a5e; }
.light.amber { background: #f5bf4f; }
.light.green { background: #61c454; }
.title { margin: -3px 0 0; font-size: 26px; font-weight: 600; color: #48474a; letter-spacing: .45px; }

.tabs {
  display: flex;
  box-sizing: border-box;
  height: 44px;
  background: #ebebeb;
  border-bottom: 1px solid #8f8f8f;
  font: 23px/44px "Liberation Sans", Arial, sans-serif;
  color: #707070;
}
.tab { padding: 1px 12.520px 0; }
.tab.active { position: relative; padding: 0; width: 79px; margin: -1px 13px 0 11px; color: #1c1c1c; height: 45px; line-height: 41px; }
.tab.active b { position: relative; font-weight: 400; }
.tab-shape { position: absolute; left: -11px; top: 0; }

.ribbon {
  display: flex;
  gap: 8px;
  box-sizing: border-box;
  height: 176px;
  padding: 5px 5px 0;
  background: linear-gradient(#d8d8d8, #ebebeb 72%);
  border-radius: 0 8px 0 0;
}
.group {
  box-sizing: border-box;
  height: 145px;
  border: 1px solid #8c8c8c;
  border-radius: 9px;
  overflow: hidden;
  background: linear-gradient(#dadada, #ececec);
  box-shadow: inset 0 2px 0 rgba(255, 255, 255, .5), 0 0 0 .5px #a8a8a8;
}
.icons { display: flex; height: 116px; padding: 2px 3px 0; box-sizing: border-box; }
.cols { display: grid; grid-auto-rows: 56px; }
.c1 { grid-template-columns: 56px; }
.c2 { grid-template-columns: 56px 56px; }
.c3 { grid-template-columns: 56px 56px 56px; }
.ic { width: 48px; height: 48px; margin: 4px; }
.sep { width: 20px; background: linear-gradient(rgba(160, 160, 160, 0), #a2a2a2 50%, rgba(160, 160, 160, 0)) 9px 0 / 1.500px 112px no-repeat, linear-gradient(rgba(255, 255, 255, 0), #fff 50%, rgba(255, 255, 255, 0)) 11px 0 / 1.500px 112px no-repeat; }
.line-art .ic { fill: none; stroke: #1c1c1c; stroke-width: 2.200; stroke-linejoin: round; }
.glyph { font: bold 33px "Liberation Sans", Arial, sans-serif; fill: #fff; stroke: none; text-anchor: middle; }
.glyph.serif { font-family: "Liberation Serif", serif; font-size: 37px; }
.glyph.narrow { font-family: "Liberation Serif", serif; font-size: 34px; fill: #c8c8c8; }
.line-art .axis { font: bold 15px "Liberation Sans", Arial, sans-serif; fill: #222; stroke: none; }
.label {
  display: flex;
  align-items: center;
  height: 28px;
  background: linear-gradient(#383838, #1f1f1f);
  color: #dedede;
  font: 20px/24px "Liberation Sans", Arial, sans-serif;
}
.label span { flex: 1; text-align: center; padding-bottom: 4px; }
.more { width: 16px; height: 16px; margin-right: 3px; }

.toolbar {
  display: flex;
  align-items: center;
  box-sizing: border-box;
  height: 61px;
  border-top: 2px solid #dad8de;
  padding: 0 19px 2px 1px;
}
.btn, .combo {
  display: flex;
  align-items: center;
  justify-content: center;
  width: 52px;
  height: 40px;
  border-radius: 11px;
  background: #fff;
  box-shadow: 0 1px 2px rgba(0, 0, 0, .28);
}
.btn.wide { width: 64px; }
.tb { width: 32px; height: 32px; }
.save, .fit { margin-left: 4px; }
.bar { width: 2px; height: 32px; margin: 0 8px; background: #d5d3da; }
.combo { width: 144px; justify-content: flex-end; }
.zoom { flex: 1; padding-left: 21px; font-size: 23.500px; letter-spacing: 0; }
.drop { display: flex; align-items: center; justify-content: center; width: 32px; height: 32px; margin-right: 4px; border-radius: 8px; background: linear-gradient(#4a93f8, #3478f6); }
.eye { margin-left: 22px; }
.brush { margin-left: 20px; }
.first-right { margin-left: auto; }
.g2 { margin-left: 2px; }
.btn.on { background: linear-gradient(#4a93f8, #3478f6); }
.b2 { margin: 0 14px; }
.g1 { width: 52px; }
.b3 { margin: 0 4px; }

.canvas { display: block; flex: none; margin: 0 1px; background: #dcdad3; }
.grid path { fill: none; stroke: rgba(0, 0, 0, .13); }
.wires path { fill: none; stroke: rgba(0, 0, 0, .6); stroke-width: 7; }
.wires .thick { stroke-width: 11; }
.grips circle { fill: #fff; stroke: #000; stroke-width: 4; }
.halo { fill: none; stroke: rgba(255, 255, 255, .75); stroke-width: 5; }
.edge { stroke: #333236; stroke-width: 2.200; }
.shine { fill: none; stroke: rgba(255, 255, 255, .6); stroke-width: 1.500; }
.ring { fill: none; stroke: rgba(255, 255, 255, .75); stroke-width: 3; }
.core { fill: url(#core); stroke: #050505; stroke-width: 2.500; }
.core-shine { fill: none; stroke: rgba(255, 255, 255, .35); stroke-width: 1.500; }
.canvas text { font-family: Inter, sans-serif; font-size: 21.500px; fill: #050505; }
.canvas .name { font-weight: 800; font-size: 26.500px; fill: #fff; }
.canvas .mono { font-family: "Liberation Mono", "Courier New", monospace; font-size: 18px; fill: #1f2d10; }
.canvas .small { font-size: 15.500px; fill: #222; }

.status {
  display: flex;
  align-items: center;
  flex: 1;
  box-sizing: border-box;
  border-top: 2px solid #d8d6dd;
  padding: 0 140px 0 3px;
  font-size: 23px;
}
.info { width: 32px; height: 32px; }
.message { flex: 1; padding-left: 4px; margin-top: -4px; letter-spacing: .47px; }
.version { margin-top: -3px; letter-spacing: .3px; }
```
